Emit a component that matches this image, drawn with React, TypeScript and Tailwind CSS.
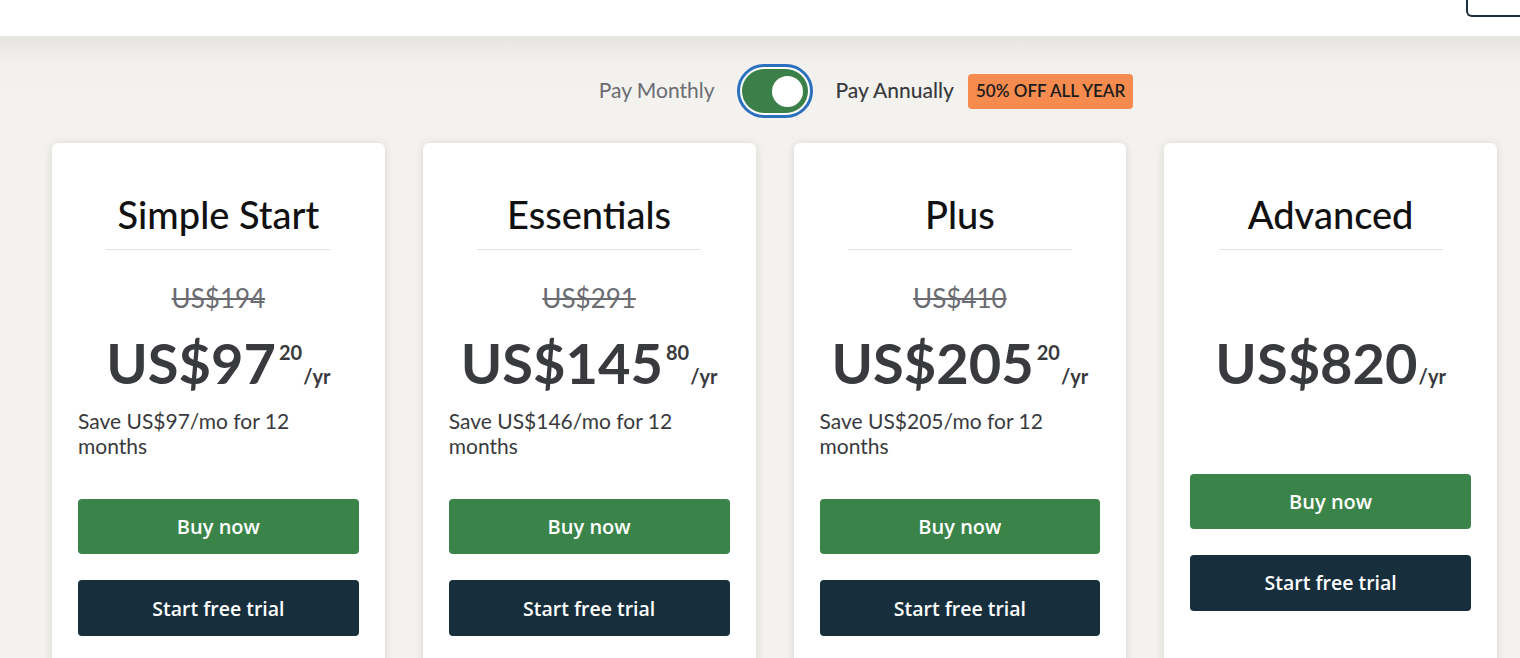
import React from 'react';

type Plan = {
  name: string;
  was?: string;
  price: string;
  cents?: string;
  save?: string;
};

const plans: Plan[] = [
  { name: 'Simple Start', was: 'US$194', price: 'US$97', cents: '20', save: 'Save US$97/mo for 12 months' },
  { name: 'Essentials', was: 'US$291', price: 'US$145', cents: '80', save: 'Save US$146/mo for 12 months' },
  { name: 'Plus', was: 'US$410', price: 'US$205', cents: '20', save: 'Save US$205/mo for 12 months' },
  { name: 'Advanced', price: 'US$820' },
];

const lato = "font-['Lato','Noto_Sans',sans-serif]";
const btnFont = "font-['Open_Sans','Noto_Sans',sans-serif]";

function PlanCard({ plan }: { plan: Plan }) {
  return (
    <div className="bg-white rounded-md shadow-[0_1px_10px_rgba(0,0,0,0.12)] px-[26px] pt-[49px] pb-10 h-[560px]">
      <div className="w-[224px] mx-auto border-b border-[#e3e3e0] pb-[13px] text-center">
        <h2 className="text-[38px] leading-[44px] font-medium text-[#111]">{plan.name}</h2>
      </div>

      {plan.was ? (
        <div className="mt-[33px] text-center text-[26px] leading-[1.2] text-[#6b6c72] line-through decoration-[2px]">
          {plan.was}
        </div>
      ) : (
        <div className="mt-[33px] h-[31px]" />
      )}

      <div className="mt-[21px] flex justify-center items-baseline text-[#393a3d] font-bold">
        <span className="text-[56px] leading-none">{plan.price}</span>
        {plan.cents && (
          <span className="relative -top-[24px] text-[20px] leading-none ml-[3px]">{plan.cents}</span>
        )}
        <span className="text-[20px] leading-none ml-[1px]">/yr</span>
      </div>

      {plan.save ? (
        <>
          <p className="mt-[17px] max-w-[240px] text-[21px] leading-[25px] text-[#393a3d]">{plan.save}</p>
          <div className="mt-[41px]" />
        </>
      ) : (
        <div className="mt-[83px]" />
      )}

      <div className={`flex flex-col gap-[26px] ${btnFont}`}>
        <button className="h-[55px] w-full rounded-[4px] bg-[#3a8449] text-white text-[20px] font-semibold">
          Buy now
        </button>
        <button className="h-[56px] w-full rounded-[4px] bg-[#172e3d] text-white text-[19.5px] font-semibold">
          Start free trial
        </button>
      </div>
    </div>
  );
}

export default function App() {
  return (
    <div className={`h-screen min-h-[658px] overflow-hidden bg-[#f3f2ef] ${lato}`}>
      <header className="h-[36px] bg-white flex justify-end items-start">
        <div className="w-[54px] h-[17px] border-l-2 border-b-2 border-[#1b2f3c] rounded-bl-[6px]" />
      </header>

      <section className="bg-[linear-gradient(to_bottom,#e6e5e1_0px,#f1f0ed_26px,#f3f2ef_60px)] pt-[28px] pl-[52px] pr-[23px]">
        <div className="grid grid-cols-[1fr_auto_1fr] items-center">
          <div className="flex justify-end pr-[22px]">
            <span className="text-[21px] leading-[26px] -mt-[2px] text-[#6b6c72]">Pay Monthly</span>
          </div>
          <div className="w-[76px] h-[54px] rounded-full border-[3px] border-[#2b70bf] bg-white p-[2px]">
            <div className="h-full w-full rounded-full bg-[#3a8048] flex items-center justify-end pr-[5px]">
              <div className="w-[31px] h-[31px] rounded-full bg-white" />
            </div>
          </div>
          <div className="flex items-center pl-[23px] gap-[14px]">
            <span className="text-[21px] leading-[26px] -mt-[2px] font-medium text-[#393a3d]">Pay Annually</span>
            <span className="h-[35px] px-[8px] rounded-[4px] bg-[#f58b4f] flex items-center text-[17px] font-semibold text-[#1b1b1b]">
              50% OFF ALL YEAR
            </span>
          </div>
        </div>

        <div className="mt-[25px] grid grid-cols-4 gap-[38px]">
          {plans.map((p) => (
            <PlanCard key={p.name} plan={p} />
          ))}
        </div>
      </section>
    </div>
  );
}
